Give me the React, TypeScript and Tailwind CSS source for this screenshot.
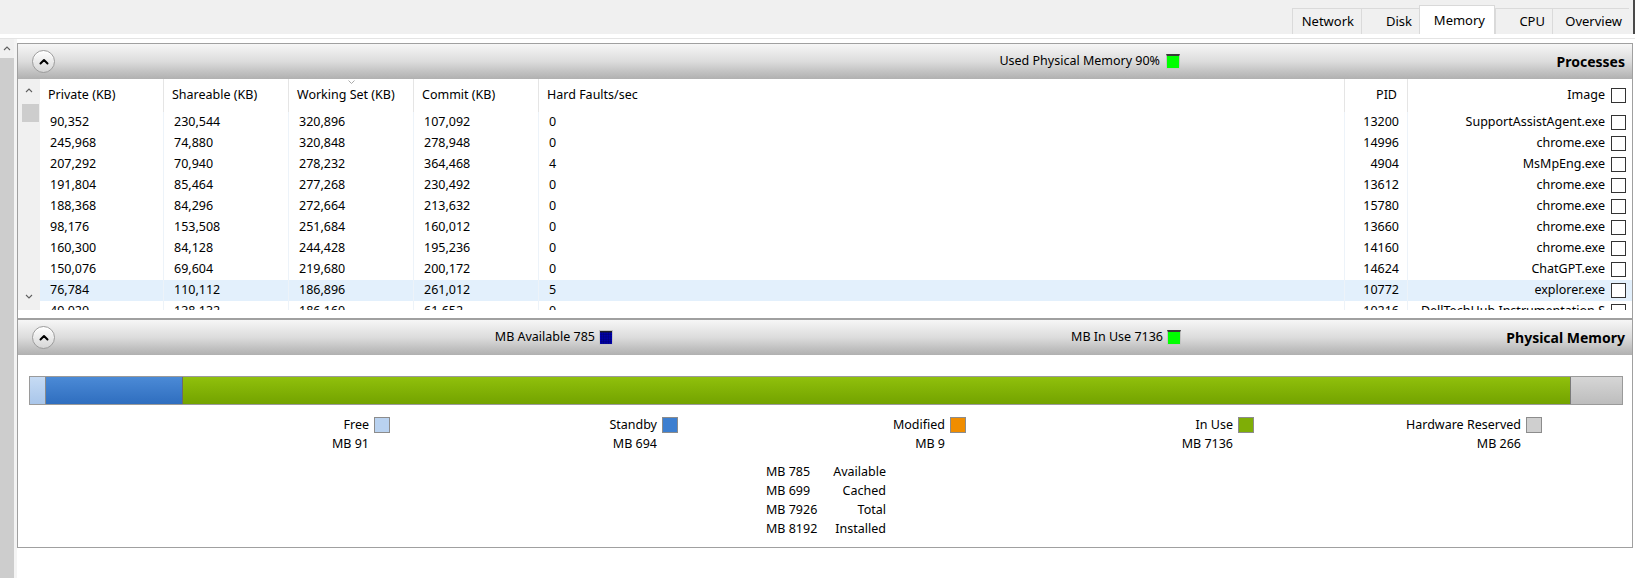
import React from "react";

const rows: string[][] = [
  ["90,352", "230,544", "320,896", "107,092", "0", "13200", "SupportAssistAgent.exe"],
  ["245,968", "74,880", "320,848", "278,948", "0", "14996", "chrome.exe"],
  ["207,292", "70,940", "278,232", "364,468", "4", "4904", "MsMpEng.exe"],
  ["191,804", "85,464", "277,268", "230,492", "0", "13612", "chrome.exe"],
  ["188,368", "84,296", "272,664", "213,632", "0", "15780", "chrome.exe"],
  ["98,176", "153,508", "251,684", "160,012", "0", "13660", "chrome.exe"],
  ["160,300", "84,128", "244,428", "195,236", "0", "14160", "chrome.exe"],
  ["150,076", "69,604", "219,680", "200,172", "0", "14624", "ChatGPT.exe"],
  ["76,784", "110,112", "186,896", "261,012", "5", "10772", "explorer.exe"],
  ["49,020", "138,132", "186,160", "61,652", "0", "10216", "DellTechHub.Instrumentation.S"],
];

const leftCols = ["w-[124px]", "w-[125px]", "w-[125px]", "w-[125px]", "w-[806px]"];
const leftHeads = ["Private (KB)", "Shareable (KB)", "Working Set (KB)", "Commit (KB)", "Hard Faults/sec"];

const tabs = [
  { label: "Network", w: "w-[69px]" },
  { label: "Disk", w: "w-[58px]" },
  { label: "Memory", w: "w-[76px]", active: true },
  { label: "CPU", w: "w-[57px]" },
  { label: "Overview", w: "w-[77px]" },
];

const legend = [
  { label: "Free", value: "MB 91", color: "bg-[#b9d2f0]" },
  { label: "Standby", value: "MB 694", color: "bg-[#3d7fd0]" },
  { label: "Modified", value: "MB 9", color: "bg-[#f08d00]" },
  { label: "In Use", value: "MB 7136", color: "bg-[#7fae06]" },
  { label: "Hardware Reserved", value: "MB 266", color: "bg-[#cfcfcf]" },
];

const summary = [
  ["MB 785", "Available"],
  ["MB 699", "Cached"],
  ["MB 7926", "Total"],
  ["MB 8192", "Installed"],
];

function Chevron({ down = false, className = "" }: { down?: boolean; className?: string }) {
  return (
    <svg width="8" height="5" viewBox="0 0 8 5" className={className}>
      <path
        d={down ? "M1 1 L4 4 L7 1" : "M1 4 L4 1 L7 4"}
        fill="none"
        stroke="#606060"
        strokeWidth="1.1"
      />
    </svg>
  );
}

function CollapseButton() {
  return (
    <div className="w-[23px] h-[23px] rounded-full border border-[#9c9c9c] bg-gradient-to-b from-white to-[#d6d6d6] shadow-[inset_0_1px_0_#ffffff] flex items-center justify-center">
      <svg width="10" height="7" viewBox="0 0 10 7">
        <path d="M1.5 5.5 L5 2 L8.5 5.5" fill="none" stroke="#000" strokeWidth="2" strokeLinecap="round" strokeLinejoin="round" />
      </svg>
    </div>
  );
}

function GreenSwatch() {
  return <div className="w-[14px] h-[15px] bg-[#00ff00] border border-[#c4c4c4] border-t-2 border-t-[#3a3a3a]" />;
}

function BlueSwatch() {
  return (
    <svg width="14" height="15" viewBox="0 0 14 15" className="border border-[#c4c4c4]">
      <rect width="14" height="15" fill="#0000c8" />
      {[2, 4, 6, 8, 10, 12].map((x) => (
        <line key={"v" + x} x1={x} y1="0" x2={x} y2="15" stroke="#000060" strokeWidth="0.6" />
      ))}
      {[2, 4, 6, 8, 10, 12, 14].map((y) => (
        <line key={"h" + y} x1="0" y1={y} x2="14" y2={y} stroke="#000060" strokeWidth="0.6" />
      ))}
      <rect width="14" height="1.5" fill="#202020" />
    </svg>
  );
}

function Checkbox() {
  return <div className="w-[15px] h-[15px] border border-[#333] bg-white shrink-0" />;
}

function PanelHeader({ children }: { children: React.ReactNode }) {
  return (
    <div className="h-[35px] bg-gradient-to-b from-[#f6f6f6] via-[#dcdcdc] to-[#b0b0b0] flex items-center pl-[14px]">
      <CollapseButton />
      {children}
    </div>
  );
}

function ProcessTable() {
  return (
    <div className="h-[231px] flex overflow-hidden">
      <div className="w-[22px] bg-[#f0f0f0] flex flex-col">
        <div className="h-[22px] flex items-center justify-center pt-[1px]">
          <Chevron />
        </div>
        <div className="mt-[3px] ml-[4px] w-[17px] h-[18px] bg-[#cdcdcd]" />
        <div className="flex-1" />
        <div className="h-[26px] flex items-center justify-center pb-[2px]">
          <Chevron down />
        </div>
      </div>
      <div className="w-[1592px] flex flex-col bg-white">
        <div className="h-[33px] flex shrink-0">
          {leftHeads.map((h, i) => (
            <div key={h} className={`${leftCols[i]} relative border-r border-[#e5e5e5] flex items-center pl-[8px]`}>
              {i === 2 && (
                <svg width="7" height="4" viewBox="0 0 7 4" className="absolute left-[59px] top-[1px]">
                  <path d="M0.5 0.5 L3.5 3.5 L6.5 0.5" fill="none" stroke="#a0a0a0" strokeWidth="0.9" />
                </svg>
              )}
              {h}
            </div>
          ))}
          <div className="w-[63px] border-r border-[#e5e5e5] flex items-center justify-end pr-[10px]">PID</div>
          <div className="w-[224px] flex items-center justify-end gap-[6px] pr-[6px]">
            Image
            <Checkbox />
          </div>
        </div>
        {rows.map((r, ri) => (
          <div key={ri} className={`h-[21px] flex shrink-0 ${ri === 8 ? "bg-[#e3f0fc]" : ""}`}>
            {r.slice(0, 5).map((c, ci) => (
              <div key={ci} className={`${leftCols[ci]} border-r border-[#edf3f9] flex items-center pl-[10px]`}>
                {c}
              </div>
            ))}
            <div className="w-[63px] border-r border-[#edf3f9] flex items-center justify-end pr-[8px]">{r[5]}</div>
            <div className="w-[224px] flex items-center justify-end gap-[6px] pr-[6px] overflow-hidden whitespace-nowrap">
              {r[6]}
              <Checkbox />
            </div>
          </div>
        ))}
      </div>
    </div>
  );
}

function MemoryBar() {
  return (
    <div className="ml-[11px] mr-[9px] h-[29px] border border-[#9a9a9a] flex">
      <div className="w-[16px] bg-gradient-to-b from-[#c6dbf4] to-[#a9c6ea] border-r border-[#8a8a8a]" />
      <div className="w-[137px] bg-gradient-to-b from-[#4b8ad6] to-[#2f6ebf] border-r border-[#6a6a6a]" />
      <div className="w-[1388px] bg-gradient-to-b from-[#90c00c] to-[#73a300] border-r border-[#7a7a7a]" />
      <div className="flex-1 bg-gradient-to-b from-[#d6d6d6] to-[#bdbdbd]" />
    </div>
  );
}

export default function App() {
  return (
    <div className="w-[1635px] h-[578px] overflow-hidden bg-white text-[12.5px] leading-none text-black font-['Noto_Sans',sans-serif] flex flex-col">
      <div className="h-[34px] shrink-0 bg-[#f0f0f0] flex items-end justify-end pr-[4px] border-r-2 border-[#4a4a4a]">
        {tabs.map((t) =>
          t.active ? (
            <div key={t.label} className={`${t.w} h-[29px] bg-white border border-b-0 border-[#d9d9d9] flex items-center justify-end pr-[9px] text-[13px]`}>
              {t.label}
            </div>
          ) : (
            <div key={t.label} className={`${t.w} h-[26px] bg-[#f0f0f0] border-l border-t border-[#dadada] flex items-center justify-end pr-[7px] text-[13px]`}>
              {t.label}
            </div>
          )
        )}
      </div>
      <div className="h-[4px] shrink-0 bg-white" />
      <div className="flex-1 flex border-t border-[#e4e4e4]">
        <div className="w-[14px] flex flex-col">
          <div className="h-[19px] bg-[#f0f0f0] flex items-center justify-center">
            <Chevron />
          </div>
          <div className="flex-1 bg-[#cdcdcd]" />
        </div>
        <div className="w-[3px] bg-[#f4f4f4]" />
        <div className="w-[1616px] pt-[4px] flex flex-col">
          <div className="border border-[#a0a0a0] flex flex-col">
            <PanelHeader>
              <div className="w-[1125px] flex items-center justify-end gap-[6px]">
                Used Physical Memory 90%
                <GreenSwatch />
              </div>
              <div className="flex-1 text-right pr-[7px] text-[14px] font-bold">Processes</div>
            </PanelHeader>
            <ProcessTable />
            <div className="h-[8px] bg-white" />
          </div>
          <div className="border border-[#a0a0a0] flex flex-col">
            <PanelHeader>
              <div className="w-[558px] flex items-center justify-end gap-[4px]">
                MB Available 785
                <BlueSwatch />
              </div>
              <div className="w-[568px] flex items-center justify-end gap-[4px]">
                MB In Use 7136
                <GreenSwatch />
              </div>
              <div className="flex-1 text-right pr-[7px] text-[14px] font-bold">Physical Memory</div>
            </PanelHeader>
            <div className="h-[192px] bg-white pt-[21px] flex flex-col">
              <MemoryBar />
              <div className="mt-[12px] pl-[282px] flex gap-[198px]">
                {legend.map((l) => (
                  <div key={l.label} className="w-[90px] flex flex-col items-end">
                    <div className="h-[16px] flex items-center justify-end gap-[5px] whitespace-nowrap">
                      {l.label}
                      <div className={`w-[16px] h-[16px] border border-[#8c8c8c] ${l.color}`} />
                    </div>
                    <div className="h-[18px] mt-[2px] flex items-center pr-[21px] whitespace-nowrap">{l.value}</div>
                  </div>
                ))}
              </div>
              <div className="mt-[10px] pl-[748px] flex flex-col">
                {summary.map(([v, l]) => (
                  <div key={l} className="h-[19px] flex items-center">
                    <div className="w-[70px]">{v}</div>
                    <div className="w-[50px] flex justify-end whitespace-nowrap">{l}</div>
                  </div>
                ))}
              </div>
            </div>
          </div>
        </div>
        <div className="flex-1 bg-white" />
      </div>
    </div>
  );
}
